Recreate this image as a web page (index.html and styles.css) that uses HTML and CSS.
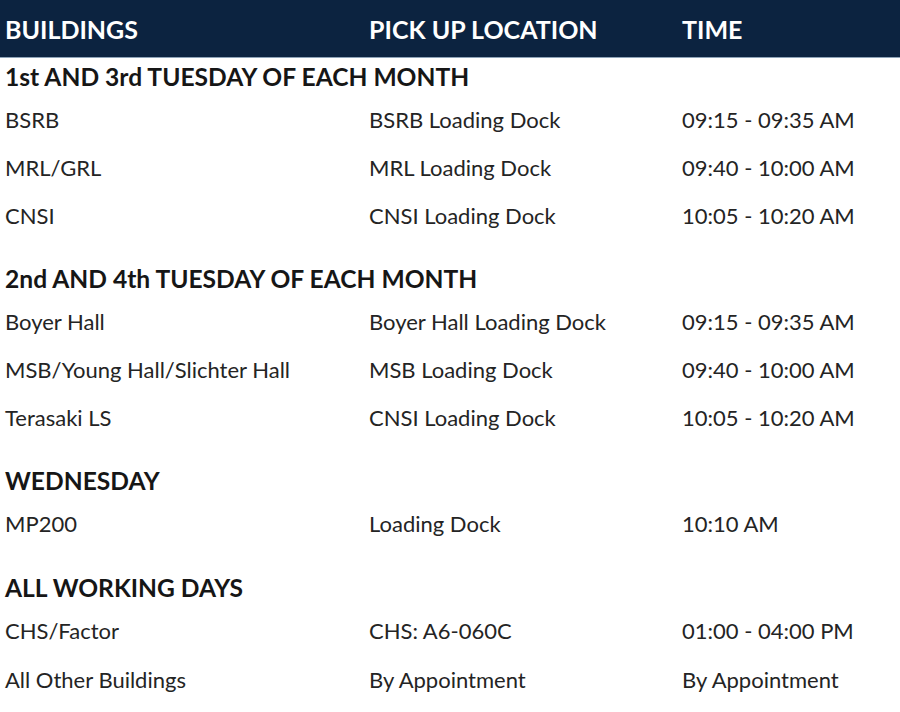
FILE: index.html
```html
<!DOCTYPE html>
<html>
<head>
<meta charset="utf-8">
<link rel="stylesheet" href="styles.css">
</head>
<body>
<div class="schedule">
  <div class="head row">
    <div>BUILDINGS</div><div>PICK UP LOCATION</div><div>TIME</div>
  </div>
  <section class="group first">
    <h2>1st AND 3rd TUESDAY OF EACH MONTH</h2>
    <div class="row"><div>BSRB</div><div>BSRB Loading Dock</div><div>09:15 - 09:35 AM</div></div>
    <div class="row"><div>MRL/GRL</div><div>MRL Loading Dock</div><div>09:40 - 10:00 AM</div></div>
    <div class="row"><div>CNSI</div><div>CNSI Loading Dock</div><div>10:05 - 10:20 AM</div></div>
  </section>
  <section class="group">
    <h2>2nd AND 4th TUESDAY OF EACH MONTH</h2>
    <div class="row"><div>Boyer Hall</div><div>Boyer Hall Loading Dock</div><div>09:15 - 09:35 AM</div></div>
    <div class="row"><div>MSB/Young Hall/Slichter Hall</div><div>MSB Loading Dock</div><div>09:40 - 10:00 AM</div></div>
    <div class="row"><div>Terasaki LS</div><div>CNSI Loading Dock</div><div>10:05 - 10:20 AM</div></div>
  </section>
  <section class="group">
    <h2>WEDNESDAY</h2>
    <div class="row"><div>MP200</div><div>Loading Dock</div><div>10:10 AM</div></div>
  </section>
  <section class="group last">
    <h2>ALL WORKING DAYS</h2>
    <div class="row"><div>CHS/Factor</div><div>CHS: A6-060C</div><div>01:00 - 04:00 PM</div></div>
    <div class="row"><div>All Other Buildings</div><div>By Appointment</div><div>By Appointment</div></div>
  </section>
</div>
</body>
</html>
```
FILE: styles.css
```css
html, body {
  margin: 0;
  padding: 0;
  background: #ffffff;
}
body {
  font-family: Lato, "Open Sans", sans-serif;
  color: #242424;
  width: 900px;
  height: 712px;
  overflow: hidden;
}
.row {
  display: grid;
  grid-template-columns: 364px 313px 1fr;
  height: 48px;
  align-items: center;
  font-size: 22px;
  padding-left: 5px;
}
.head {
  height: 57px;
  background: #0c2340;
  border-bottom: 1px solid #8ea3b8;
  color: #ffffff;
  font-weight: 700;
  font-size: 25px;
}
.group h2 {
  margin: 0;
  height: 38px;
  display: flex;
  align-items: center;
  padding-left: 5px;
  font-size: 24.6px;
  font-weight: 700;
  color: #161616;
}
.group {
  margin-top: 20px;
}
.group.first {
  margin-top: -1px;
}
.group.last {
  margin-top: 21px;
}
.group.last .row {
  height: 49px;
}
```
